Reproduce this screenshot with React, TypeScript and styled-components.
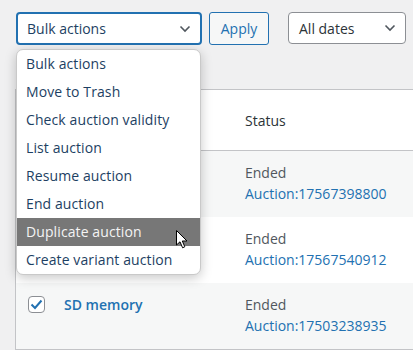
import { createGlobalStyle } from 'styled-components';
import styled from 'styled-components';

const GlobalStyle = createGlobalStyle`
  html, body {
    margin: 0;
    padding: 0;
    background: #f0f0f1;
    overflow: hidden;
  }
  body {
    font-family: 'Open Sans', 'Noto Sans', sans-serif;
    font-size: 14px;
    color: #2c3338;
  }
`;

const Page = styled.div`
  position: relative;
  width: 413px;
  height: 350px;
  padding: 12px 0 0 15px;
  box-sizing: border-box;
  overflow: hidden;
`;

const Toolbar = styled.div`
  display: flex;
  align-items: flex-start;
  height: 33px;
`;

const SelectBox = styled.div<{ $focused?: boolean; $width: number }>`
  display: flex;
  align-items: center;
  justify-content: space-between;
  box-sizing: border-box;
  width: ${(p) => p.$width}px;
  height: ${(p) => (p.$focused ? 33 : 32)}px;
  margin-left: ${(p) => (p.$focused ? 1 : 0)}px;
  padding: 0 9px 0 ${(p) => (p.$focused ? 9 : 10)}px;
  background: #fff;
  border: ${(p) => (p.$focused ? '2px solid #2271b1' : '1px solid #8c8f94')};
  border-radius: 4px;
  color: ${(p) => (p.$focused ? '#1d3f63' : '#2c3338')};
  font-size: 14px;
`;

const ApplyButton = styled.button`
  box-sizing: border-box;
  width: 60px;
  height: 33px;
  margin-left: 7px;
  padding: 0;
  background: #f6f7f7;
  border: 1px solid #2271b1;
  border-radius: 3px;
  color: #2271b1;
  font-family: inherit;
  font-size: 14px;
`;

const Spacer = styled.div<{ $w: number }>`
  width: ${(p) => p.$w}px;
  flex: none;
`;

const Table = styled.div`
  margin-top: 44px;
  background: #fff;
  border: 1px solid #c3c4c7;
  border-right: none;
`;

const Row = styled.div<{ $striped?: boolean; $header?: boolean }>`
  display: grid;
  grid-template-columns: 48px 181px 1fr;
  box-sizing: border-box;
  height: ${(p) => (p.$header ? 61 : 66)}px;
  align-items: ${(p) => (p.$header ? 'center' : 'start')};
  background: ${(p) => (p.$striped ? '#f6f7f7' : '#fff')};
  border-bottom: ${(p) => (p.$header ? '1px solid #c3c4c7' : 'none')};
  padding-top: ${(p) => (p.$header ? 0 : 11)}px;
`;

const CheckCell = styled.div`
  padding: 2px 0 0 12px;
`;

const Checkbox = styled.div`
  display: flex;
  align-items: center;
  justify-content: center;
  box-sizing: border-box;
  width: 17px;
  height: 17px;
  background: #fff;
  border: 1px solid #8c8f94;
  border-radius: 4px;
`;

const TitleLink = styled.a`
  font-weight: 600;
  font-size: 14px;
  line-height: 21px;
  color: #2271b1;
  text-decoration: none;
`;

const StatusCell = styled.div`
  display: flex;
  flex-direction: column;
  font-size: 14px;
  line-height: 21px;
  color: #50575e;
`;

const HeaderLabel = styled.div`
  color: #2c3338;
  font-size: 14px;
`;

const AuctionLink = styled.a`
  color: #2271b1;
  text-decoration: none;
`;

const Menu = styled.ul`
  position: absolute;
  left: 16px;
  top: 49px;
  width: 185px;
  margin: 0;
  padding: 0;
  list-style: none;
  box-sizing: border-box;
  background: #fff;
  border: 1px solid #c9c9c9;
  border-radius: 7px;
  overflow: hidden;
  box-shadow: 0 3px 12px rgba(0, 0, 0, 0.22);
`;

const MenuItem = styled.li<{ $active?: boolean }>`
  height: 28px;
  line-height: 28px;
  padding-left: 9px;
  font-size: 14px;
  letter-spacing: 0.1px;
  white-space: nowrap;
  color: ${(p) => (p.$active ? '#f4f4f4' : '#1d3f63')};
  background: ${(p) => (p.$active ? '#777777' : 'transparent')};
`;

const Pointer = styled.svg`
  position: absolute;
  left: 176px;
  top: 230px;
`;

const Chevron = () => (
  <svg width="12" height="8" viewBox="0 0 12 8">
    <path d="M1.5 1.5 L6 6 L10.5 1.5" fill="none" stroke="#50575e" strokeWidth="1.6" />
  </svg>
);

const menuItems = [
  'Bulk actions',
  'Move to Trash',
  'Check auction validity',
  'List auction',
  'Resume auction',
  'End auction',
  'Duplicate auction',
  'Create variant auction',
];

const rows = [
  { title: '', auction: '17567398800', striped: true },
  { title: '', auction: '17567540912', striped: false },
  { title: 'SD memory', auction: '17503238935', striped: true },
];

export default function App() {
  return (
    <Page>
      <GlobalStyle />
      <Toolbar>
        <SelectBox $focused $width={186}>
          <span>Bulk actions</span>
          <Chevron />
        </SelectBox>
        <ApplyButton>Apply</ApplyButton>
        <Spacer $w={19} />
        <SelectBox $width={118}>
          <span>All dates</span>
          <Chevron />
        </SelectBox>
      </Toolbar>

      <Table>
        <Row $header>
          <div />
          <div />
          <HeaderLabel>Status</HeaderLabel>
        </Row>
        {rows.map((r) => (
          <Row key={r.auction} $striped={r.striped}>
            <CheckCell>
              <Checkbox>
                <svg width="13" height="11" viewBox="0 0 13 11">
                  <path d="M1.5 5.5 L5 9 L11.5 1.5" fill="none" stroke="#2271b1" strokeWidth="2" />
                </svg>
              </Checkbox>
            </CheckCell>
            <div>{r.title && <TitleLink href="#">{r.title}</TitleLink>}</div>
            <StatusCell>
              <span>Ended</span>
              <AuctionLink href="#">Auction:{r.auction}</AuctionLink>
            </StatusCell>
          </Row>
        ))}
      </Table>

      <Menu>
        {menuItems.map((item) => (
          <MenuItem key={item} $active={item === 'Duplicate auction'}>
            {item}
          </MenuItem>
        ))}
      </Menu>

      <Pointer width="13" height="19" viewBox="0 0 13 19">
        <path
          d="M0.5 0.5 L0.5 15 L4 11.8 L6.6 17.8 L8.8 16.8 L6.3 11 L11 11 Z"
          fill="#fff"
          stroke="#000"
          strokeWidth="1"
          strokeLinejoin="round"
        />
      </Pointer>
    </Page>
  );
}
